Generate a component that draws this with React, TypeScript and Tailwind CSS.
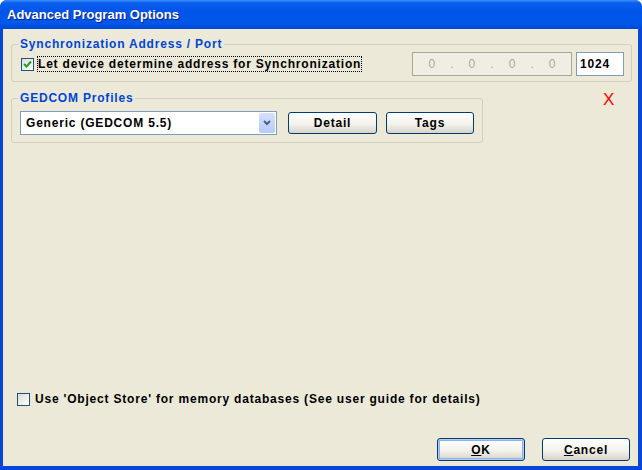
import { ReactNode } from 'react';

const font = "font-['Liberation_Sans',Arial,sans-serif]";

function XpCheckbox({ checked }: { checked?: boolean }) {
  return (
    <span className="flex h-[13px] w-[13px] shrink-0 items-center justify-center border border-[#1c5180] bg-[linear-gradient(135deg,#dcdcd7,#ffffff)]">
      {checked && (
        <svg width="9" height="9" viewBox="0 0 9 9">
          <path d="M1 4 L3.5 6.5 L8 1.5" fill="none" stroke="#21a121" strokeWidth="2" />
        </svg>
      )}
    </span>
  );
}

function XpButton({ children, isDefault, className }: { children: ReactNode; isDefault?: boolean; className?: string }) {
  return (
    <button
      type="button"
      className={`flex items-center justify-center rounded-[3px] border border-[#003c74] bg-[linear-gradient(to_bottom,#ffffff,#f3f2eb_55%,#d8d3c8)] text-[12px] font-bold tracking-[0.8px] text-black ${
        isDefault ? 'shadow-[inset_0_0_0_1px_#b6cdf2,inset_0_0_0_2px_#8eb0ea]' : ''
      } ${className ?? ''}`}
    >
      {children}
    </button>
  );
}

function GroupBox({ label, className, children }: { label: string; className: string; children: ReactNode }) {
  return (
    <fieldset className={`rounded-[3px] border border-[#d0d0bf] ${className}`}>
      <legend className="ml-[6px] px-[2px] text-[12px] leading-[14px] font-bold text-[#0046d5]">{label}</legend>
      {children}
    </fieldset>
  );
}

export default function App() {
  return (
    <div className={`flex h-[470px] w-[642px] flex-col overflow-hidden rounded-t-[7px] bg-[#0846d8] ${font}`}>
      {/* title bar */}
      <div className="flex h-[29px] shrink-0 items-center bg-[linear-gradient(to_bottom,#3c8ef8_0%,#0a5ff0_10%,#0055e8_40%,#0057ea_80%,#0048d6_100%)] pl-[7px]">
        <span className="text-[13px] font-bold text-white [text-shadow:1px_1px_0_#0a1e8c]">Advanced Program Options</span>
      </div>

      <div className="mb-[4px] ml-[3px] mr-[4px] flex flex-1 flex-col bg-[#ece9d8] px-[8px] pt-[8px] pb-[5px] text-[12px] font-bold tracking-[0.8px] text-black">
        <GroupBox label="Synchronization Address / Port" className="h-[45px] w-[621px]">
          <div className="flex items-center pl-[9px] pr-[7px] pt-[1px]">
            <XpCheckbox checked />
            <span className="ml-[3px] border border-dotted border-black leading-[14px]">
              Let device determine address for Synchronization
            </span>
            <div className="ml-auto flex h-[24px] w-[160px] items-center justify-around border border-[#aca899] bg-[#f0eee4] px-[8px] font-normal tracking-normal text-[#aca899]">
              <span>0</span>
              <span>.</span>
              <span>0</span>
              <span>.</span>
              <span>0</span>
              <span>.</span>
              <span>0</span>
            </div>
            <div className="ml-[4px] flex h-[24px] w-[48px] items-center border border-[#7f9db9] bg-white pl-[3px]">1024</div>
          </div>
        </GroupBox>

        <div className="mt-[9px] flex">
          <GroupBox label="GEDCOM Profiles" className="h-[52px] w-[472px]">
            <div className="flex items-center pl-[8px] pt-[6px]">
              <div className="flex h-[24px] w-[257px] items-center border border-[#7f9db9] bg-white pl-[5px]">
                <span className="flex-1">Generic (GEDCOM 5.5)</span>
                <span className="mr-[1px] flex h-[20px] w-[16px] items-center justify-center rounded-[2px] bg-[linear-gradient(to_bottom,#d4e0fc,#b7cbf8)]">
                  <svg width="8" height="6" viewBox="0 0 8 6">
                    <path d="M1 1 L4 4 L7 1" fill="none" stroke="#4d6185" strokeWidth="2" />
                  </svg>
                </span>
              </div>
              <XpButton className="ml-[11px] h-[22px] w-[89px]">Detail</XpButton>
              <XpButton className="ml-[9px] h-[22px] w-[88px]">Tags</XpButton>
            </div>
          </GroupBox>
          <span className="ml-[120px] mt-[-4px] text-[17px] font-normal tracking-normal text-[#ff0000]">X</span>
        </div>

        <div className="flex-1" />

        <div className="flex items-center pl-[6px]">
          <XpCheckbox />
          <span className="ml-[5px]">Use 'Object Store' for memory databases (See user guide for details)</span>
        </div>

        <div className="mt-[30px] flex justify-end gap-[17px]">
          <XpButton isDefault className="h-[23px] w-[88px]">
            <span className="underline">O</span>K
          </XpButton>
          <XpButton className="h-[23px] w-[88px]">
            <span className="underline">C</span>ancel
          </XpButton>
        </div>
      </div>
    </div>
  );
}
